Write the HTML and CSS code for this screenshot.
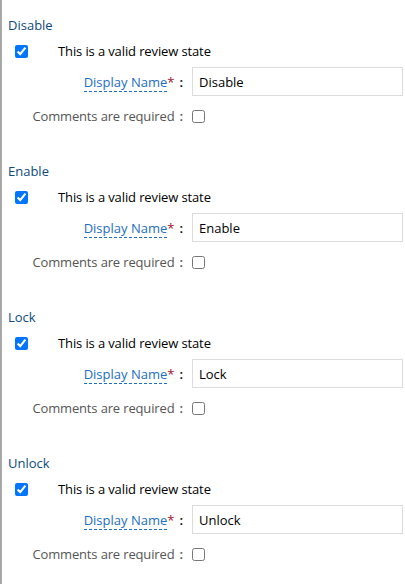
FILE: index.html
```html
<!DOCTYPE html>
<html>
<head>
<meta charset="utf-8">
<link rel="stylesheet" href="styles.css">
</head>
<body>
<div class="panel">
  <div class="section">
    <div class="title">Disable</div>
    <div class="valid-row"><input type="checkbox" class="cb" checked><span class="valid-text">This is a valid review state</span></div>
    <div class="field-row"><span class="label"><span class="link">Display Name</span><span class="req">*</span><span class="colon">:</span></span><input class="text-input" type="text" value="Disable"></div>
    <div class="field-row small"><span class="label gray">Comments are required<span class="colon">:</span></span><input type="checkbox" class="cb"></div>
  </div>
  <div class="section">
    <div class="title">Enable</div>
    <div class="valid-row"><input type="checkbox" class="cb" checked><span class="valid-text">This is a valid review state</span></div>
    <div class="field-row"><span class="label"><span class="link">Display Name</span><span class="req">*</span><span class="colon">:</span></span><input class="text-input" type="text" value="Enable"></div>
    <div class="field-row small"><span class="label gray">Comments are required<span class="colon">:</span></span><input type="checkbox" class="cb"></div>
  </div>
  <div class="section">
    <div class="title">Lock</div>
    <div class="valid-row"><input type="checkbox" class="cb" checked><span class="valid-text">This is a valid review state</span></div>
    <div class="field-row"><span class="label"><span class="link">Display Name</span><span class="req">*</span><span class="colon">:</span></span><input class="text-input" type="text" value="Lock"></div>
    <div class="field-row small"><span class="label gray">Comments are required<span class="colon">:</span></span><input type="checkbox" class="cb"></div>
  </div>
  <div class="section">
    <div class="title">Unlock</div>
    <div class="valid-row"><input type="checkbox" class="cb" checked><span class="valid-text">This is a valid review state</span></div>
    <div class="field-row"><span class="label"><span class="link">Display Name</span><span class="req">*</span><span class="colon">:</span></span><input class="text-input" type="text" value="Unlock"></div>
    <div class="field-row small"><span class="label gray">Comments are required<span class="colon">:</span></span><input type="checkbox" class="cb"></div>
  </div>
</div>
</body>
</html>
```
FILE: styles.css
```css
html, body {
  margin: 0;
  padding: 0;
  background: #fff;
}
body {
  font-family: "Open Sans", "Noto Sans", sans-serif;
  font-size: 13px;
  color: #000;
}
.panel {
  border-left: 2px solid #a8a8a8;
  padding-left: 6px;
  min-height: 584px;
  box-sizing: border-box;
}
.section {
  padding-top: 16px;
  padding-bottom: 20px;
  display: flex;
  flex-direction: column;
}
.title {
  height: 18px;
  line-height: 18px;
  color: #0e4a7e;
  margin-bottom: 6px;
}
.valid-row {
  height: 20px;
  display: flex;
  align-items: center;
  margin-top: 1px;
  margin-bottom: 6px;
}
.cb {
  width: 13px;
  height: 13px;
  margin: 0;
  flex: none;
}
.valid-row .cb {
  margin-left: 7px;
}
.valid-text {
  margin-left: 30px;
  letter-spacing: -0.12px;
}
.field-row {
  display: flex;
  align-items: center;
  height: 29px;
}
.field-row.small {
  height: 20px;
  margin-top: 10px;
}
.label {
  width: 175px;
  text-align: right;
  margin-right: 9px;
  flex: none;
}
.link {
  color: #1b6ec2;
  border-bottom: 1px dashed #1b6ec2;
}
.req {
  color: #a0102a;
}
.colon {
  margin-left: 5px;
  font-weight: 600;
  letter-spacing: 0;
}
.gray {
  color: #555;
  letter-spacing: -0.15px;
}
.text-input {
  width: 211px;
  height: 29px;
  box-sizing: border-box;
  border: 1px solid #dcdcdc;
  padding: 0 6px;
  font-family: inherit;
  font-size: 13px;
  color: #000;
  margin: 0;
  outline: none;
}
```
